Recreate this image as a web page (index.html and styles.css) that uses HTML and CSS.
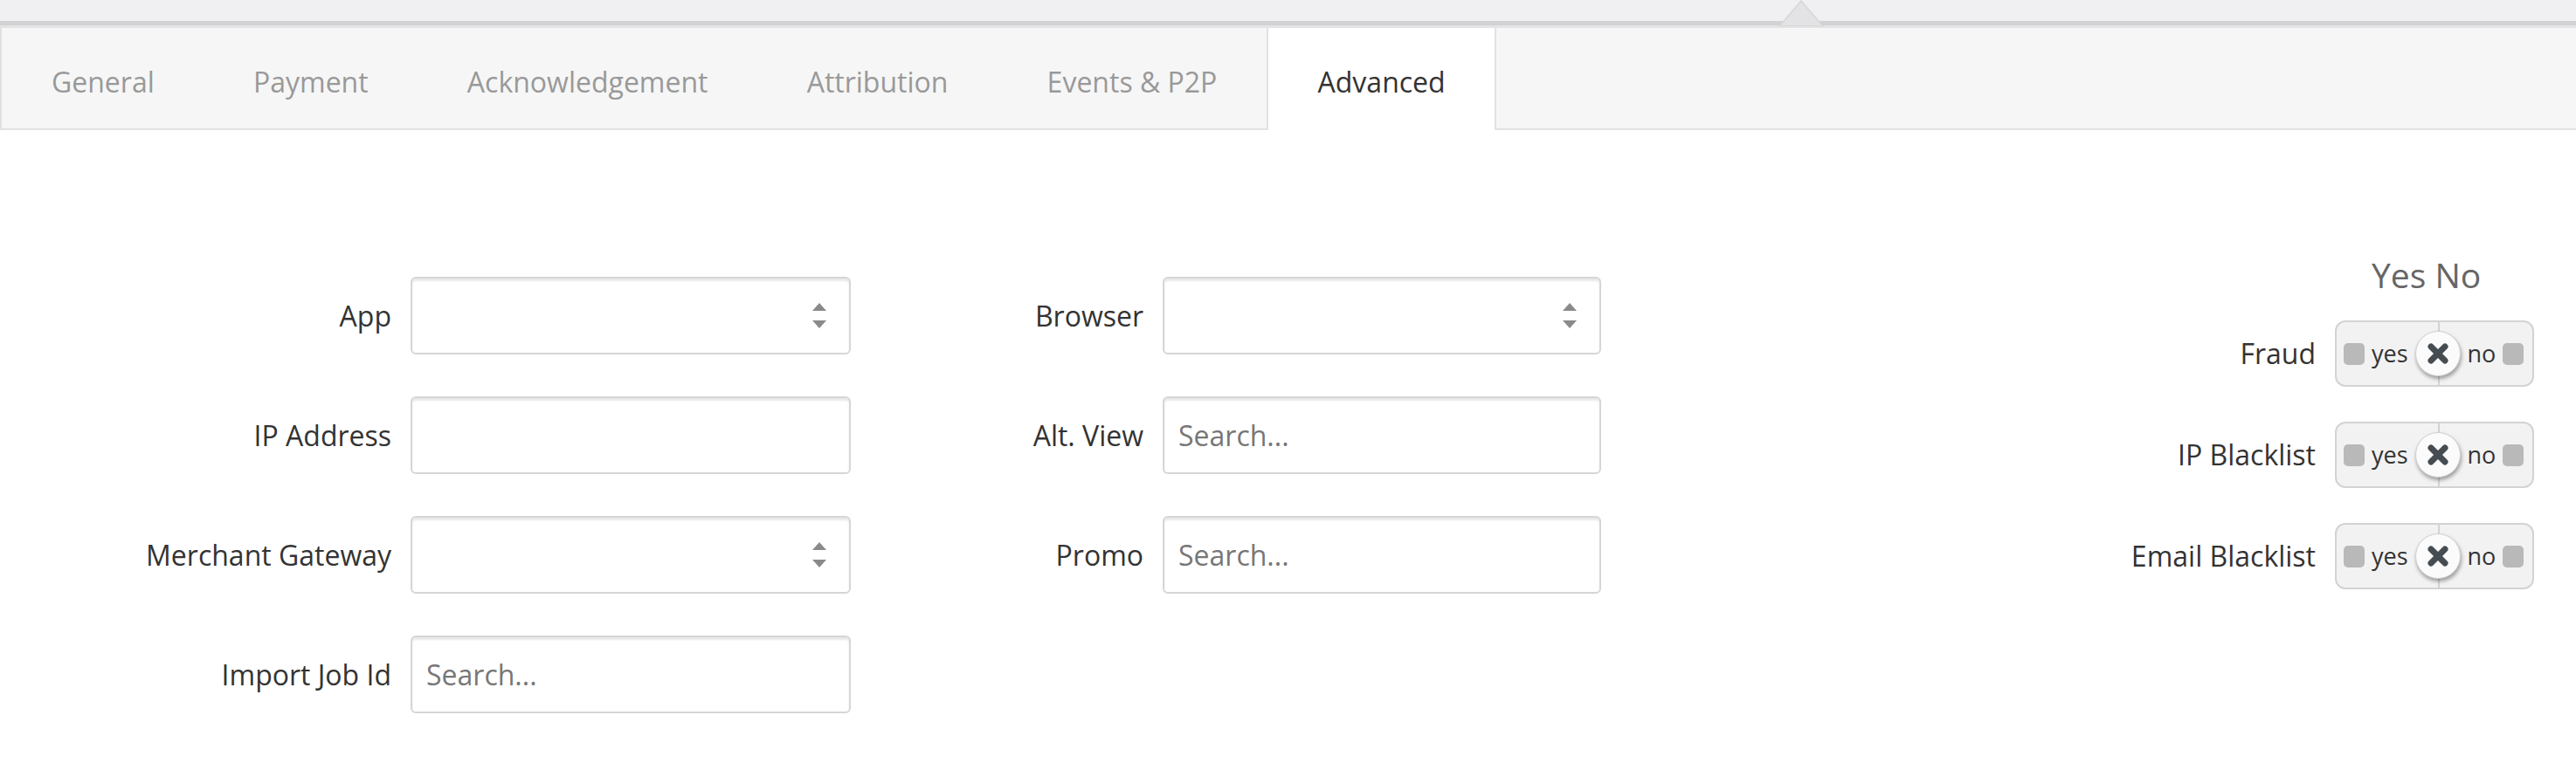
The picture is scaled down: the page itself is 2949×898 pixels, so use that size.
FILE: index.html
```html
<!DOCTYPE html>
<html lang="en">
<head>
<meta charset="utf-8">
<title>Advanced</title>
<link rel="stylesheet" href="styles.css">
</head>
<body>
<div class="topbar">
  <svg class="caret" width="52" height="30" viewBox="0 0 52 30"><polygon points="1,30 26,1 51,30" fill="#e3e3e5" stroke="#d6d6d8" stroke-width="1.5"/></svg>
</div>
<nav class="tabs">
  <div class="tab">General</div>
  <div class="tab">Payment</div>
  <div class="tab">Acknowledgement</div>
  <div class="tab">Attribution</div>
  <div class="tab">Events &amp; P2P</div>
  <div class="tab active">Advanced</div>
</nav>
<main class="content">
  <section class="col col1">
    <label class="lbl">App</label>
    <div class="field select"><svg class="arrows" width="16" height="29" viewBox="0 0 16 29"><polygon points="0,9 8,0 16,9" fill="#8a8a8a"/><polygon points="0,20 16,20 8,29" fill="#8a8a8a"/></svg></div>
    <label class="lbl">IP Address</label>
    <input class="field" type="text">
    <label class="lbl">Merchant Gateway</label>
    <div class="field select"><svg class="arrows" width="16" height="29" viewBox="0 0 16 29"><polygon points="0,9 8,0 16,9" fill="#8a8a8a"/><polygon points="0,20 16,20 8,29" fill="#8a8a8a"/></svg></div>
    <label class="lbl">Import Job Id</label>
    <input class="field" type="text" placeholder="Search...">
  </section>
  <section class="col col2">
    <label class="lbl">Browser</label>
    <div class="field select"><svg class="arrows" width="16" height="29" viewBox="0 0 16 29"><polygon points="0,9 8,0 16,9" fill="#8a8a8a"/><polygon points="0,20 16,20 8,29" fill="#8a8a8a"/></svg></div>
    <label class="lbl">Alt. View</label>
    <input class="field" type="text" placeholder="Search...">
    <label class="lbl">Promo</label>
    <input class="field" type="text" placeholder="Search...">
  </section>
  <section class="col col3">
    <div class="yn-head">Yes No</div>
    <label class="lbl">Fraud</label>
    <div class="toggle">
      <span class="sq"></span><span class="tw">yes</span>
      <span class="slot"><span class="knob"><svg width="26" height="24" viewBox="0 0 26 24"><path d="M5 4 L21 20 M21 4 L5 20" stroke="#454c52" stroke-width="7" stroke-linecap="round"/></svg></span></span>
      <span class="tw">no</span><span class="sq"></span>
    </div>
    <label class="lbl">IP Blacklist</label>
    <div class="toggle">
      <span class="sq"></span><span class="tw">yes</span>
      <span class="slot"><span class="knob"><svg width="26" height="24" viewBox="0 0 26 24"><path d="M5 4 L21 20 M21 4 L5 20" stroke="#454c52" stroke-width="7" stroke-linecap="round"/></svg></span></span>
      <span class="tw">no</span><span class="sq"></span>
    </div>
    <label class="lbl">Email Blacklist</label>
    <div class="toggle">
      <span class="sq"></span><span class="tw">yes</span>
      <span class="slot"><span class="knob"><svg width="26" height="24" viewBox="0 0 26 24"><path d="M5 4 L21 20 M21 4 L5 20" stroke="#454c52" stroke-width="7" stroke-linecap="round"/></svg></span></span>
      <span class="tw">no</span><span class="sq"></span>
    </div>
  </section>
</main>
</body>
</html>
```
FILE: styles.css
```css
* { box-sizing: border-box; }
html, body { margin: 0; padding: 0; background: #fff; }
body {
  font-family: "Open Sans", "Liberation Sans", sans-serif;
  font-size: 32px;
  color: #333;
  width: 2949px;
}
.topbar {
  position: relative;
  height: 29px;
  background: #f0f0f2;
  border-bottom: 5px solid #d2d2d4;
}
.caret {
  position: absolute;
  left: 2036px;
  top: 0;
}
.tabs {
  display: flex;
  background: #f6f6f6;
  border-top: 3px solid #e3e3e5;
  border-left: 2px solid #e0e0e0;
  border-bottom: 2px solid #e2e2e2;
  height: 120px;
}
.tab {
  padding: 40px 56.6px 0;
  line-height: 44px;
  color: #999;
  white-space: nowrap;
}
.tab:first-child { padding-left: 57px; }
.tab.active {
  background: #fff;
  color: #333;
  border-left: 2px solid #e2e2e2;
  border-right: 2px solid #e2e2e2;
  margin-bottom: -2px;
}
.content {
  display: flex;
  align-items: flex-start;
  padding: 142px 48px 40px 0;
}
.col {
  display: grid;
  column-gap: 22px;
  row-gap: 48px;
  align-items: center;
}
.col1 {
  grid-template-columns: 448px 504px;
  margin-top: 26px;
}
.col2 {
  grid-template-columns: 335px 502px;
  margin-top: 26px;
}
.col3 {
  margin-left: auto;
  grid-template-columns: auto 228px;
  row-gap: 40px;
}
.lbl {
  text-align: right;
  white-space: nowrap;
  line-height: 44px;
}
.field {
  display: block;
  width: 100%;
  height: 89px;
  margin: 0;
  border: 2px solid #d6d6d6;
  border-radius: 6px;
  box-shadow: inset 0 3px 2px rgba(0,0,0,0.09);
  background: #fff;
  font-family: "Open Sans", "Liberation Sans", sans-serif;
  font-size: 32px;
  color: #555;
  padding: 0 16px;
  outline: none;
}
.field::placeholder { color: #777; }
.select {
  display: flex;
  align-items: center;
  justify-content: flex-end;
  padding-right: 26px;
}
.yn-head {
  grid-column: 2;
  font-size: 39px;
  line-height: 48px;
  color: #666;
  padding-left: 42px;
  margin-bottom: -12px;
}
.toggle {
  display: flex;
  align-items: center;
  gap: 8px;
  height: 76px;
  padding: 0 8px;
  border: 2px solid #d3d3d3;
  border-radius: 12px;
  background: #f2f2f2;
  font-size: 27px;
  color: #333;
}
.sq {
  width: 24px;
  height: 25px;
  border-radius: 5px;
  background: #b9b9b9;
  flex: none;
}
.tw { line-height: 30px; }
.slot {
  position: relative;
  align-self: stretch;
  display: flex;
  align-items: center;
}
.slot::before {
  content: "";
  position: absolute;
  left: 50%;
  top: 0;
  bottom: 0;
  width: 2px;
  background: #d3d3d3;
}
.knob {
  position: relative;
  width: 52px;
  height: 52px;
  border-radius: 50%;
  background: #fbfbfb;
  border: 1px solid #d0d0d0;
  box-shadow: 1px 3px 4px rgba(0,0,0,0.35);
  display: flex;
  align-items: center;
  justify-content: center;
}
```
